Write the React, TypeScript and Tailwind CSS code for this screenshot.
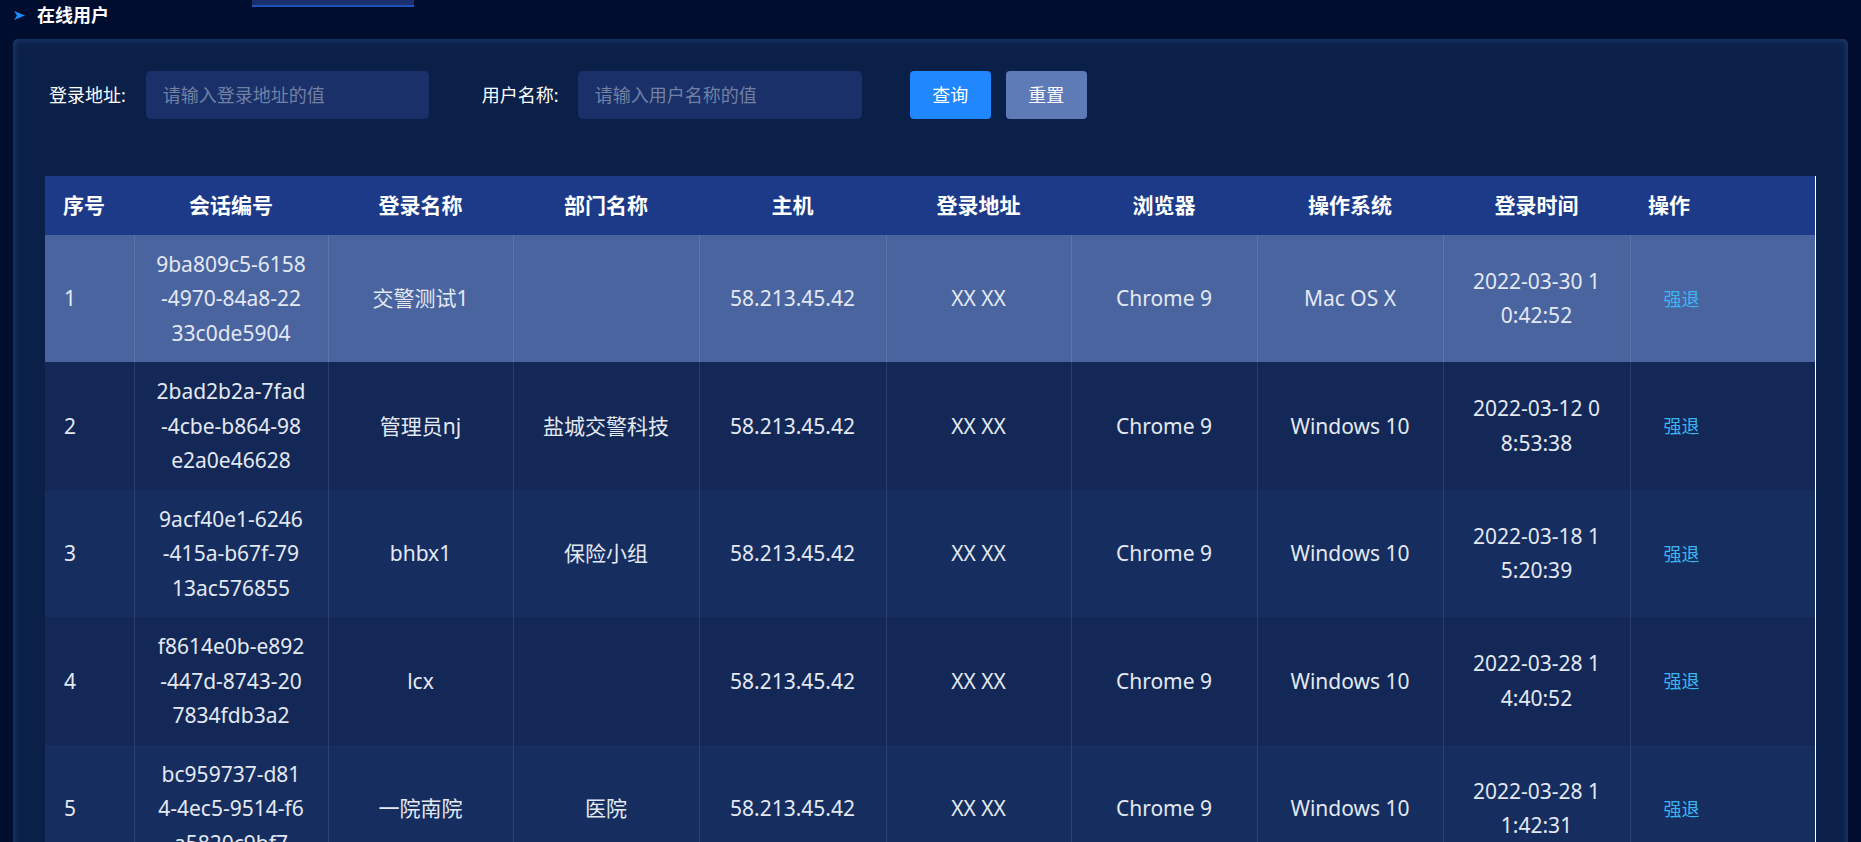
import React from 'react';

const columns = [
  { title: '序号', width: 'w-[89px]', align: 'left' },
  { title: '会话编号', width: 'w-[194px]', align: 'center' },
  { title: '登录名称', width: 'w-[185px]', align: 'center' },
  { title: '部门名称', width: 'w-[186px]', align: 'center' },
  { title: '主机', width: 'w-[187px]', align: 'center' },
  { title: '登录地址', width: 'w-[185px]', align: 'center' },
  { title: '浏览器', width: 'w-[186px]', align: 'center' },
  { title: '操作系统', width: 'w-[186px]', align: 'center' },
  { title: '登录时间', width: 'w-[187px]', align: 'center' },
  { title: '操作', width: '', align: 'left' }
];

const sessions = [
  {
    id: ['9ba809c5-6158', '-4970-84a8-22', '33c0de5904'],
    name: '交警测试1',
    dept: '',
    os: 'Mac OS X',
    time: ['2022-03-30 1', '0:42:52']
  },
  {
    id: ['2bad2b2a-7fad', '-4cbe-b864-98', 'e2a0e46628'],
    name: '管理员nj',
    dept: '盐城交警科技',
    os: 'Windows 10',
    time: ['2022-03-12 0', '8:53:38']
  },
  {
    id: ['9acf40e1-6246', '-415a-b67f-79', '13ac576855'],
    name: 'bhbx1',
    dept: '保险小组',
    os: 'Windows 10',
    time: ['2022-03-18 1', '5:20:39']
  },
  {
    id: ['f8614e0b-e892', '-447d-8743-20', '7834fdb3a2'],
    name: 'lcx',
    dept: '',
    os: 'Windows 10',
    time: ['2022-03-28 1', '4:40:52']
  },
  {
    id: ['bc959737-d81', '4-4ec5-9514-f6', 'a5820c9bf7'],
    name: '一院南院',
    dept: '医院',
    os: 'Windows 10',
    time: ['2022-03-28 1', '1:42:31']
  }
];

const rowBg = (i: number) => {
  if (i === 0) return 'bg-[#4a64a0]';
  return i % 2 === 1 ? 'bg-[#132856]' : 'bg-[#152d5f]';
};

const Lines = ({ lines }: { lines: string[] }) => (
  <>
    {lines.map((l, i) => (
      <div key={l + i} className="whitespace-nowrap">
        {l}
      </div>
    ))}
  </>
);

const App = () => {
  return (
    <div className="h-screen w-full overflow-hidden bg-[#000d2e] flex flex-col font-['Noto_Sans','Noto_Sans_CJK_SC',sans-serif]">
      {/* tab strip fragment from the nav above */}
      <div className="h-[7px] shrink-0 flex">
        <div className="ml-[252px] w-[162px] h-full bg-[#1a2f6e] border-b-2 border-[#1f52bd]" />
      </div>
      <div className="h-[17px] shrink-0 flex items-center pl-[14px]">
        <svg width="11" height="9" viewBox="0 0 11 9" className="mr-[12px]">
          <polygon points="0,0 11,4.5 0,9 3,4.5" fill="#1a8cff" />
        </svg>
        <span className="text-white font-bold text-[18px] leading-[17px]">在线用户</span>
      </div>

      <div className="mt-[15px] mx-[13px] flex-1 shrink-0 rounded-[5px] bg-[#0b2049] shadow-[inset_0_0_8px_rgba(52,88,160,0.6)] pt-[32px] px-[32px]">
        <div className="h-[48px] flex items-center text-[18px]">
          <span className="ml-[4px] mr-[20px] text-white">登录地址:</span>
          <input
            placeholder="请输入登录地址的值"
            className="w-[283px] h-full rounded-[5px] bg-[#193069] pl-[17px] text-white placeholder:text-[#7280a3] outline-none"
          />
          <span className="ml-[53px] mr-[19px] text-white">用户名称:</span>
          <input
            placeholder="请输入用户名称的值"
            className="w-[284px] h-full rounded-[5px] bg-[#193069] pl-[17px] text-white placeholder:text-[#7280a3] outline-none"
          />
          <button className="ml-[48px] w-[81px] h-full rounded-[4px] bg-[#2087fe] text-white">查询</button>
          <button className="ml-[15px] w-[81px] h-full rounded-[4px] bg-[#5f7bb7] text-white">重置</button>
        </div>

        <div className="mt-[57px] border-r border-white">
          <table className="w-full table-fixed border-collapse text-[21px] leading-[34.5px]">
            <colgroup>
              {columns.map((c) => (
                <col key={c.title} className={c.width} />
              ))}
            </colgroup>
            <thead>
              <tr className="bg-[#1c3a87]">
                {columns.map((c) => (
                  <th
                    key={c.title}
                    className={
                      'py-[12px] font-bold text-white ' +
                      (c.align === 'left' ? 'text-left pl-[18px]' : 'text-center')
                    }
                  >
                    {c.title}
                  </th>
                ))}
              </tr>
            </thead>
            <tbody className="text-[#e3e8f2]">
              {sessions.map((s, i) => (
                <tr key={s.id[0]} className={rowBg(i)}>
                  <td className="py-[12px] pl-[19px] text-left">{i + 1}</td>
                  <td className="py-[12px] text-center border-l border-white/10">
                    <Lines lines={s.id} />
                  </td>
                  <td className="py-[12px] text-center border-l border-white/10">{s.name}</td>
                  <td className="py-[12px] text-center border-l border-white/10">{s.dept}</td>
                  <td className="py-[12px] text-center border-l border-white/10">58.213.45.42</td>
                  <td className="py-[12px] text-center border-l border-white/10">XX XX</td>
                  <td className="py-[12px] text-center border-l border-white/10">Chrome 9</td>
                  <td className="py-[12px] text-center border-l border-white/10">{s.os}</td>
                  <td className="py-[12px] text-center border-l border-white/10">
                    <Lines lines={s.time} />
                  </td>
                  <td className="py-[12px] pl-[33px] text-left border-l border-white/10">
                    <span className="text-[18px] text-[#3cb6f2] cursor-pointer">强退</span>
                  </td>
                </tr>
              ))}
            </tbody>
          </table>
        </div>
      </div>
    </div>
  );
};

export default App;
